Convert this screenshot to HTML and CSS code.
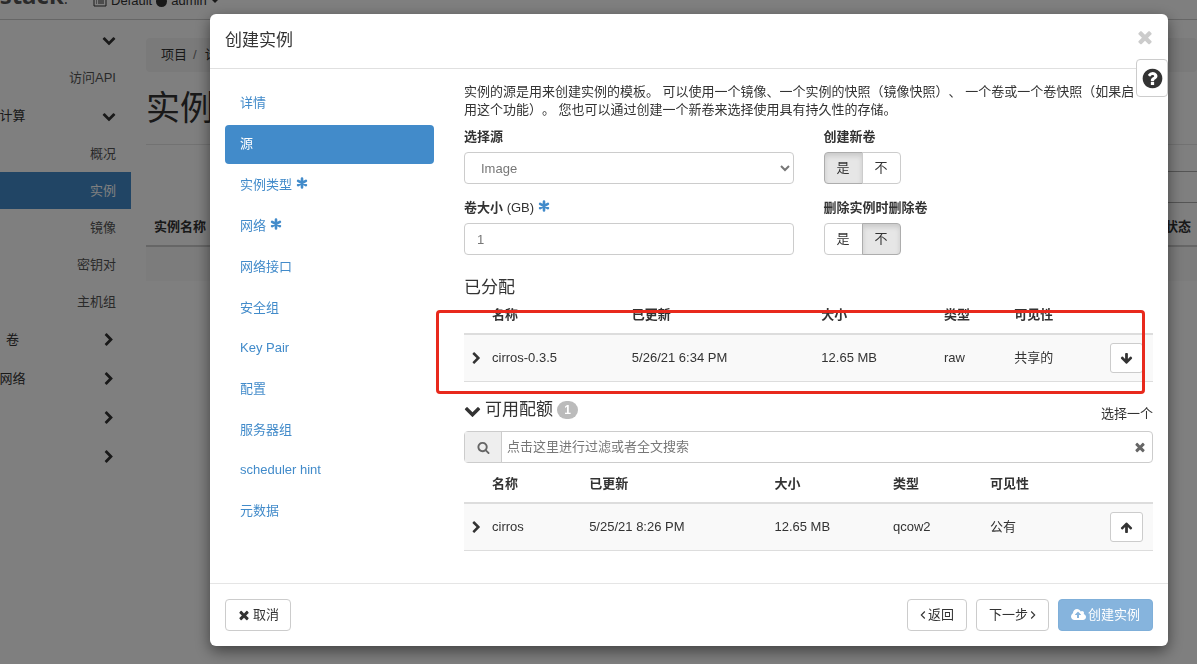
FILE: index.html
```html
<!DOCTYPE html>
<html lang="zh-CN">
<head>
<meta charset="utf-8">
<title>创建实例</title>
<link rel="stylesheet" href="styles.css">
</head>
<body>
<svg class="sprite" aria-hidden="true">
  <symbol id="chevron-down" viewBox="0 0 1792 1792"><path d="M1683 808l-742 741q-19 19-45 19t-45-19l-742-741q-19-19-19-45.500t19-45.500l166-165q19-19 45-19t45 19l531 531 531-531q19-19 45-19t45 19l166 165q19 19 19 45.500t-19 45.500z"/></symbol>
  <symbol id="chevron-right" viewBox="0 0 1792 1792"><path d="M1363 877l-742 742q-19 19-45 19t-45-19l-166-166q-19-19-19-45t19-45l531-531-531-531q-19-19-19-45t19-45l166-166q19-19 45-19t45 19l742 742q19 19 19 45t-19 45z"/></symbol>
  <symbol id="times" viewBox="0 0 1792 1792"><path d="M1490 1322q0 40-28 68l-136 136q-28 28-68 28t-68-28l-294-294-294 294q-28 28-68 28t-68-28l-136-136q-28-28-28-68t28-68l294-294-294-294q-28-28-28-68t28-68l136-136q28-28 68-28t68 28l294 294 294-294q28-28 68-28t68 28l136 136q28 28 28 68t-28 68l-294 294 294 294q28 28 28 68z"/></symbol>
  <symbol id="arrow-up" viewBox="0 0 1792 1792"><path d="M1675 971q0 51-37 90l-75 75q-38 38-91 38-54 0-90-38l-294-293v704q0 52-37.500 84.500t-90.500 32.500h-128q-53 0-90.500-32.500t-37.500-84.500v-704l-294 293q-36 38-90 38t-90-38l-75-75q-38-38-38-90 0-53 38-91l651-651q35-37 90-37 54 0 91 37l651 651q37 39 37 91z"/></symbol>
  <symbol id="arrow-down" viewBox="0 0 1792 1792"><path d="M1675 832q0 53-37 90l-651 652q-39 37-91 37-53 0-90-37l-651-652q-38-36-38-90 0-53 38-91l74-75q39-37 91-37 53 0 90 37l294 294v-704q0-52 38-90t90-38h128q52 0 90 38t38 90v704l294-294q37-37 90-37 52 0 91 37l75 75q37 39 37 91z"/></symbol>
  <symbol id="search" viewBox="0 0 1792 1792"><path d="M1216 832q0-185-131.500-316.500t-316.500-131.500-316.500 131.500-131.500 316.500 131.500 316.500 316.500 131.500 316.500-131.500 131.500-316.500zm512 832q0 52-38 90t-90 38q-54 0-90-38l-343-342q-179 124-399 124-143 0-273.500-55.500t-225-150-150-225-55.500-273.500 55.500-273.500 150-225 225-150 273.500-55.500 273.500 55.500 225 150 150 225 55.500 273.500q0 220-124 399l343 343q37 37 37 90z"/></symbol>
  <symbol id="question" viewBox="0 0 1792 1792"><path d="M1024 1376v-192q0-14-9-23t-23-9h-192q-14 0-23 9t-9 23v192q0 14 9 23t23 9h192q14 0 23-9t9-23zm256-672q0-88-55.500-163t-138.500-116-170-41q-243 0-371 213-15 24 8 42l132 100q7 6 19 6 16 0 25-12 53-68 86-92 34-24 86-24 48 0 85.500 26t37.500 59q0 38-20 61t-68 45q-63 28-115.500 86.500t-52.500 125.500v36q0 14 9 23t23 9h192q14 0 23-9t9-23q0-19 21.500-49.500t54.500-49.500q32-18 49-28.500t46-35 44.500-48 28-60.500 12.500-81zm384 192q0 209-103 385.500t-279.500 279.500-385.500 103-385.500-103-279.500-279.500-103-385.500 103-385.500 279.500-279.500 385.500-103 385.500 103 279.500 279.500 103 385.500z"/></symbol>
  <symbol id="cloud" viewBox="0 0 1920 1792"><path d="M1280 864q0-14-9-23l-352-352q-9-9-23-9t-23 9l-351 351q-10 12-10 24 0 14 9 23t23 9h224v352q0 13 9.500 22.500t22.500 9.500h192q13 0 22.500-9.500t9.500-22.500v-352h224q13 0 22.500-9.500t9.500-22.500zm640 288q0 159-112.500 271.500t-271.500 112.500h-1088q-185 0-316.500-131.500t-131.500-316.500q0-130 70-240t188-165q-2-30-2-43 0-212 150-362t362-150q156 0 285.500 87t188.500 231q71-62 166-62 106 0 181 75t75 181q0 76-41 138 130 31 213.500 135.500t83.500 238.500z"/></symbol>
  <symbol id="asterisk" viewBox="0 0 12 12"><path d="M6 1.500v9M2.100 3.800l7.800 4.400M2.100 8.200l7.800-4.400" fill="none" stroke="currentColor" stroke-width="2.600" stroke-linecap="round"/></symbol>
  <symbol id="angle-left" viewBox="0 0 6 10"><path d="M4.800 1.500L1.300 5l3.500 3.500" fill="none" stroke="currentColor" stroke-width="1.100"/></symbol>
  <symbol id="angle-right" viewBox="0 0 6 10"><path d="M1.200 1.500L4.700 5 1.200 8.500" fill="none" stroke="currentColor" stroke-width="1.100"/></symbol>
  <symbol id="list" viewBox="0 0 14 12"><path d="M1 1h12v10H1zM3 4h1M5 4h6M3 6h1M5 6h6M3 8h1M5 8h6" fill="none" stroke="currentColor"/></symbol>
</svg>

<div class="page">
  <header class="topbar">
    <div class="brand"><span>openstack<small>.</small></span></div>
    <div class="context">
      <svg class="icon icon-14"><use href="#list"/></svg>
      <span>Default</span>
      <span class="dot"></span>
      <span>admin</span>
      <span class="caret"></span>
    </div>
  </header>
  <div class="main">
    <nav class="sidebar">
      <div class="group"><span class="group-name"></span><svg class="icon icon-14"><use href="#chevron-down"/></svg></div>
      <a class="side-link" href="#">访问API</a>
      <div class="group"><span class="group-name">计算</span><svg class="icon icon-14"><use href="#chevron-down"/></svg></div>
      <a class="side-link" href="#">概况</a>
      <a class="side-link current" href="#">实例</a>
      <a class="side-link" href="#">镜像</a>
      <a class="side-link" href="#">密钥对</a>
      <a class="side-link" href="#">主机组</a>
      <div class="group"><span class="group-name">卷</span><svg class="icon icon-14"><use href="#chevron-right"/></svg></div>
      <div class="group"><span class="group-name">网络</span><svg class="icon icon-14"><use href="#chevron-right"/></svg></div>
      <div class="group"><span class="group-name"></span><svg class="icon icon-14"><use href="#chevron-right"/></svg></div>
      <div class="group"><span class="group-name"></span><svg class="icon icon-14"><use href="#chevron-right"/></svg></div>
    </nav>
    <div class="content">
      <div class="breadcrumb"><span>项目</span><span class="slash">/</span><span>计算</span></div>
      <h1 class="page-title">实例</h1>
      <div class="toolbar"></div>
      <div class="list-head"><span>实例名称</span><span>状态</span></div>
      <div class="list-row"></div>
    </div>
  </div>
</div>

<div class="backdrop">
  <section class="modal" role="dialog" aria-labelledby="dialog-title">
    <header class="modal-header">
      <h2 class="modal-title" id="dialog-title">创建实例</h2>
      <button class="close" type="button" aria-label="关闭"><svg class="icon icon-20"><use href="#times"/></svg></button>
    </header>
    <button class="help" type="button" aria-label="帮助"><svg class="icon icon-23"><use href="#question"/></svg></button>

    <div class="modal-body">
      <nav class="steps">
        <a class="step" href="#">详情</a>
        <a class="step active" href="#">源</a>
        <a class="step" href="#">实例类型 <svg class="icon icon-12 star"><use href="#asterisk"/></svg></a>
        <a class="step" href="#">网络 <svg class="icon icon-12 star"><use href="#asterisk"/></svg></a>
        <a class="step" href="#">网络接口</a>
        <a class="step" href="#">安全组</a>
        <a class="step" href="#" lang="en">Key Pair</a>
        <a class="step" href="#">配置</a>
        <a class="step" href="#">服务器组</a>
        <a class="step" href="#" lang="en">scheduler hint</a>
        <a class="step" href="#">元数据</a>
      </nav>

      <div class="panel">
        <p class="intro">实例的源是用来创建实例的模板。 可以使用一个镜像、一个实例的快照（镜像快照）、 一个卷或一个卷快照（如果启用这个功能）。 您也可以通过创建一个新卷来选择使用具有持久性的存储。</p>
        <div class="form">
          <div class="field">
            <label class="label" for="source">选择源</label>
            <select class="control" id="source"><option>Image</option></select>
          </div>
          <div class="field">
            <span class="label" id="new-volume">创建新卷</span>
            <div class="toggle" role="group" aria-labelledby="new-volume">
              <button class="toggle-btn on" type="button">是</button><button class="toggle-btn" type="button">不</button>
            </div>
          </div>
          <div class="field">
            <label class="label" for="size">卷大小 <span class="unit">(GB)</span> <svg class="icon icon-12 star"><use href="#asterisk"/></svg></label>
            <input class="control" id="size" type="text" value="1">
          </div>
          <div class="field">
            <span class="label" id="delete-volume">删除实例时删除卷</span>
            <div class="toggle" role="group" aria-labelledby="delete-volume">
              <button class="toggle-btn" type="button">是</button><button class="toggle-btn on" type="button">不</button>
            </div>
          </div>
        </div>

        <h3 class="section-title">已分配</h3>
        <div class="allocated">
          <table class="table">
            <colgroup><col class="c-toggle"><col class="a-name"><col class="a-updated"><col class="a-size"><col class="a-type"><col><col class="c-action"></colgroup>
            <thead><tr><th></th><th>名称</th><th>已更新</th><th>大小</th><th>类型</th><th>可见性</th><th></th></tr></thead>
            <tbody><tr>
              <td><svg class="icon icon-13"><use href="#chevron-right"/></svg></td>
              <td>cirros-0.3.5</td><td>5/26/21 6:34 PM</td><td>12.65 MB</td><td>raw</td><td>共享的</td>
              <td><button class="move" type="button" aria-label="移除"><svg class="icon icon-13"><use href="#arrow-down"/></svg></button></td>
            </tr></tbody>
          </table>
          <div class="highlight"></div>
        </div>

        <div class="available-head">
          <h3 class="section-title with-icon"><svg class="icon icon-17"><use href="#chevron-down"/></svg>可用配额<span class="badge">1</span></h3>
          <span class="hint">选择一个</span>
        </div>
        <div class="search">
          <span class="search-addon"><svg class="icon icon-13"><use href="#search"/></svg></span>
          <input class="search-input" type="text" aria-label="过滤" placeholder="点击这里进行过滤或者全文搜索">
          <button class="clear" type="button" aria-label="清除"><svg class="icon icon-14"><use href="#times"/></svg></button>
        </div>
        <table class="table">
          <colgroup><col class="c-toggle"><col class="b-name"><col class="b-updated"><col class="b-size"><col class="b-type"><col><col class="c-action"></colgroup>
          <thead><tr><th></th><th>名称</th><th>已更新</th><th>大小</th><th>类型</th><th>可见性</th><th></th></tr></thead>
          <tbody><tr>
            <td><svg class="icon icon-13"><use href="#chevron-right"/></svg></td>
            <td>cirros</td><td>5/25/21 8:26 PM</td><td>12.65 MB</td><td>qcow2</td><td>公有</td>
            <td><button class="move" type="button" aria-label="分配"><svg class="icon icon-13"><use href="#arrow-up"/></svg></button></td>
          </tr></tbody>
        </table>
      </div>
    </div>

    <footer class="modal-footer">
      <button class="btn cancel" type="button"><svg class="icon icon-14"><use href="#times"/></svg>取消</button>
      <button class="btn" type="button"><svg class="angle"><use href="#angle-left"/></svg>返回</button>
      <button class="btn" type="button">下一步<svg class="angle"><use href="#angle-right"/></svg></button>
      <button class="btn primary" type="button" disabled><svg class="icon icon-15"><use href="#cloud"/></svg>创建实例</button>
    </footer>
  </section>
</div>
</body>
</html>
```

FILE: styles.css
```css
* { box-sizing: border-box; }

body {
  margin: 0;
  height: 100vh;
  overflow: hidden;
  background: #fff;
  color: #333;
  font: 13px/18px "Liberation Sans", "Noto Sans CJK SC", sans-serif;
  text-spacing-trim: space-all;
}

button, input, select { font: inherit; color: inherit; }
button { cursor: pointer; }
a { text-decoration: none; }

.sprite { position: absolute; width: 0; height: 0; }
.icon { flex: none; fill: currentColor; vertical-align: middle; }
.icon-12 { width: 12px; height: 12px; }
.icon-13 { width: 13px; height: 13px; }
.icon-14 { width: 14px; height: 14px; }
.icon-15 { width: 15px; height: 14px; }
.icon-17 { width: 17px; height: 17px; }
.icon-20 { width: 20px; height: 20px; }
.icon-23 { width: 23px; height: 23px; }
.star { color: #428bca; vertical-align: 0; }

/* Page behind the dialog, scrolled slightly down */
.page { margin-top: -30px; }

.topbar {
  display: flex;
  align-items: flex-end;
  height: 50px;
  padding-bottom: 9px;
  border-bottom: 1px solid #ccc;
}
.brand {
  display: flex;
  justify-content: flex-end;
  width: 68px;
  margin-right: 25px;
  font: bold 24px/24px "Open Sans", sans-serif;
  color: #555;
}
.brand small { font-size: 16px; font-weight: 400; }
.context { display: flex; align-items: center; gap: 4px; }
.dot { width: 11px; height: 11px; border-radius: 50%; background: #333; }
.caret { border: 4px solid transparent; border-top-color: #333; border-bottom: 0; }

.main { display: flex; }
.sidebar { flex: none; width: 131px; overflow: hidden; }
.group {
  display: flex;
  align-items: center;
  justify-content: space-between;
  height: 39px;
  padding-right: 15px;
}
.group-name { display: flex; justify-content: center; width: 25px; white-space: nowrap; }
.side-link {
  display: flex;
  align-items: center;
  justify-content: flex-end;
  height: 37px;
  padding-right: 15px;
  color: #555;
}
.side-link.current { background: #428bca; color: #fff; }

.content { flex: 1; padding: 18px 0 0 15px; }
.breadcrumb {
  display: flex;
  gap: 6px;
  padding: 8px 15px;
  border-radius: 4px;
  background: #f5f5f5;
}
.slash { color: #777; margin-right: 2px; }
.page-title {
  margin: 0;
  padding: 12px 0;
  border-bottom: 1px solid #e5e5e5;
  font-size: 34px;
  font-weight: 400;
  line-height: 48px;
}
.toolbar { height: 32px; margin: 26px 0 0 100px; border: 1px solid #aaa; border-right: 0; }
.list-head {
  display: flex;
  justify-content: space-between;
  padding: 15px 6px 9px 8px;
  border-bottom: 2px solid #ccc;
  font-weight: 700;
}
.list-row { height: 34px; background: #f9f9f9; }

/* Dialog */
.backdrop {
  position: fixed;
  inset: 0;
  padding: 14px 29px 18px 210px;
  background: rgba(0, 0, 0, .5);
}
.modal {
  position: relative;
  border-radius: 6px;
  background: #fff;
  box-shadow: 0 5px 15px rgba(0, 0, 0, .5);
}
.modal-header {
  display: flex;
  align-items: center;
  justify-content: space-between;
  height: 55px;
  padding: 0 13px 0 15px;
  border-bottom: 1px solid #e0e0e0;
}
.modal-title { margin: 0; font-size: 17px; font-weight: 400; line-height: 24px; }
.close { display: flex; padding: 0 0 9px; border: 0; background: none; color: #ccc; }
.help {
  position: absolute;
  top: 45px;
  right: 0;
  display: flex;
  align-items: center;
  justify-content: center;
  width: 32px;
  height: 38px;
  padding: 0;
  border: 1px solid #ccc;
  border-radius: 4px;
  background: #fff;
}

.modal-body { display: grid; grid-template-columns: 239px 1fr; padding-bottom: 32px; }
.steps { display: flex; flex-direction: column; gap: 2px; padding: 15px 15px 0; }
.step {
  padding: 9px 15px 11px;
  border-radius: 4px;
  color: #428bca;
  line-height: 19px;
}
.step:lang(en) { line-height: 18px; }
.step.active { background: #428bca; color: #fff; }

.panel { min-width: 0; padding: 14px 15px 0; }
.intro { margin: 0 0 9px; padding-right: 15px; }
.form { display: grid; grid-template-columns: 1fr 1fr; gap: 15px 30px; }
.label { display: block; margin-bottom: 6px; font-weight: 700; }
.unit { font-weight: 400; }
.control {
  display: block;
  width: 100%;
  height: 32px;
  padding: 0 12px;
  border: 1px solid #ccc;
  border-radius: 4px;
  background: #fff;
  color: #777;
}
.toggle { display: flex; }
.toggle-btn {
  width: 39px;
  height: 32px;
  padding: 0;
  border: 1px solid #ccc;
  border-radius: 4px 0 0 4px;
  background: #fff;
}
.toggle-btn + .toggle-btn { margin-left: -1px; border-radius: 0 4px 4px 0; }
.toggle-btn.on {
  border-color: #adadad;
  background: #e6e6e6;
  box-shadow: inset 0 3px 5px rgba(0, 0, 0, .125);
}

.section-title { margin: 23px 0 0; font-size: 17px; font-weight: 400; line-height: 20px; }
.allocated { position: relative; }
.highlight {
  position: absolute;
  inset: 12px 8px -12px -28px;
  border: 3px solid #e8291c;
  border-radius: 4px;
  pointer-events: none;
}

.table { width: 100%; table-layout: fixed; border-collapse: separate; border-spacing: 0; }
.table th {
  padding: 7px 8px 9px;
  border-bottom: 2px solid #ddd;
  line-height: 19px;
  text-align: left;
}
.table td { height: 47px; padding: 0 8px; border-bottom: 1px solid #ddd; background: #f9f9f9; }
.table td:first-child { padding: 0 0 0 6px; }
.c-toggle { width: 20px; }
.c-action { width: 51px; }
.a-name { width: 20.3%; }
.a-updated { width: 27.5%; }
.a-size { width: 17.8%; }
.a-type { width: 10.2%; }
.b-name { width: 14.1%; }
.b-updated { width: 26.9%; }
.b-size { width: 17.2%; }
.b-type { width: 14.1%; }
.move {
  display: flex;
  align-items: center;
  justify-content: center;
  width: 33px;
  height: 30px;
  padding: 0;
  border: 1px solid #ccc;
  border-radius: 3px;
  background: #fff;
}

.available-head { display: flex; justify-content: space-between; padding-top: 15px; }
.with-icon { display: flex; align-items: center; gap: 4px; margin: 0; }
.badge {
  min-width: 21px;
  border-radius: 9px;
  background: #bbb;
  color: #fff;
  font-size: 12px;
  font-weight: 700;
  line-height: 18px;
  text-align: center;
}
.hint { padding-top: 8px; }
.search {
  display: flex;
  height: 32px;
  margin: 8px 0 4px;
  border: 1px solid #ccc;
  border-radius: 4px;
  color: #666;
}
.search-addon {
  display: flex;
  align-items: center;
  justify-content: center;
  width: 37px;
  border-right: 1px solid #ccc;
  background: #eee;
}
.search-input { flex: 1; min-width: 0; padding: 0 5px; border: 0; background: none; }
.search-input::placeholder { color: #777; }
.clear { display: flex; align-items: center; padding: 0 5px; border: 0; background: none; }

.modal-footer {
  display: flex;
  gap: 9px;
  padding: 15px;
  border-top: 1px solid #e5e5e5;
}
.btn {
  display: flex;
  align-items: center;
  gap: 2px;
  height: 32px;
  padding: 0 12px;
  border: 1px solid #ccc;
  border-radius: 4px;
  background: #fff;
}
.cancel { margin-right: auto; padding: 0 11px; }
.angle { width: 6px; height: 10px; }
.primary { border-color: #7fafd9; background: #86b4dd; color: #fff; }
```
